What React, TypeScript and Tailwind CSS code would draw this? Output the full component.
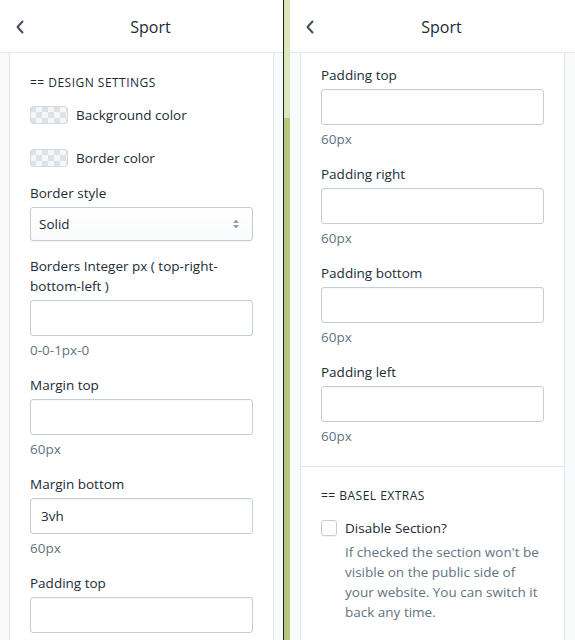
import React from "react";

const ink = "text-[#212b36]";
const muted = "text-[#637381]";

const Header = () => (
  <div className="flex h-[53px] shrink-0 items-center border-b border-[#e6e9ec] bg-white pt-[2px]">
    <button className="flex h-full w-[40px] items-center justify-center text-[#454f5b]">
      <svg width="10" height="14" viewBox="0 0 10 14" fill="none">
        <path d="M7.5 1.5L2.5 7l5 5.5" stroke="currentColor" strokeWidth="2" strokeLinecap="round" strokeLinejoin="round" />
      </svg>
    </button>
    <div className={`flex-1 text-center text-[16px] ${ink}`}>Sport</div>
    <div className="w-[22px]" />
  </div>
);

const Swatch = () => (
  <svg width="38" height="18" viewBox="0 0 38 18" className="shrink-0 rounded-[3px]">
    <defs>
      <pattern id="chk" width="12" height="12" patternUnits="userSpaceOnUse">
        <rect width="12" height="12" fill="#f4f6f8" />
        <rect width="6" height="6" fill="#dde2e7" />
        <rect x="6" y="6" width="6" height="6" fill="#dde2e7" />
      </pattern>
    </defs>
    <rect x="0.5" y="0.5" width="37" height="17" rx="2.5" fill="url(#chk)" stroke="#d3d9df" />
  </svg>
);

const SectionTitle = ({ children }: { children: React.ReactNode }) => (
  <div className={`pt-px text-[12px] font-medium uppercase leading-5 tracking-[0.04em] ${ink}`}>
    == {children}
  </div>
);

const TextField = ({ label, value, help }: { label: string; value?: string; help?: string }) => (
  <div className="flex flex-col">
    <div className={`leading-5 ${ink}`}>{label}</div>
    <div
      className={`mt-1 flex h-[36px] items-center rounded-[3px] border border-[#c4cdd5] bg-white px-[10px] shadow-[inset_0_1px_0_0_rgba(99,115,129,0.05)] ${ink}`}
    >
      {value}
    </div>
    {help && <div className={`mt-1 leading-5 ${muted}`}>{help}</div>}
  </div>
);

const Panel = ({ width, gutter, children }: { width: string; gutter: string; children: React.ReactNode }) => (
  <div className={`flex h-full shrink-0 flex-col ${width}`}>
    <Header />
    <div className={`flex-1 overflow-hidden bg-[#f9fafb] ${gutter}`}>
      <div className="h-full border-x border-[#e3e6e9] bg-white">{children}</div>
    </div>
  </div>
);

export default function App() {
  return (
    <div
      className="flex h-[640px] w-[575px] overflow-hidden bg-white text-[13.5px]"
      style={{ fontFamily: '"Open Sans", "Noto Sans", sans-serif' }}
    >
      <Panel width="w-[283px]" gutter="px-[9px]">
        <div className="flex flex-col px-5 pt-[19px]">
          <SectionTitle>Design settings</SectionTitle>
          <div className="mt-[12px] flex h-5 items-center gap-2">
            <Swatch />
            <span className={ink}>Background color</span>
          </div>
          <div className="mt-[23px] flex h-5 items-center gap-2">
            <Swatch />
            <span className={ink}>Border color</span>
          </div>
          <div className="mt-[15px] flex flex-col">
            <div className={`leading-5 ${ink}`}>Border style</div>
            <div className="mt-1 flex h-[34px] items-center justify-between rounded-[3px] border border-[#c4cdd5] bg-gradient-to-b from-white to-[#f9fafb] pl-2 pr-3 shadow-[0_1px_0_0_rgba(22,29,37,0.05)]">
              <span className={ink}>Solid</span>
              <svg width="8" height="12" viewBox="0 0 8 12" className="text-[#919eab]">
                <path d="M4 1.5L7 5H1z M4 10.5L1 7h6z" fill="currentColor" />
              </svg>
            </div>
          </div>
          <div className="mt-[15px]">
            <TextField label="Borders Integer px ( top-right-bottom-left )" help="0-0-1px-0" />
          </div>
          <div className="mt-[15px]">
            <TextField label="Margin top" help="60px" />
          </div>
          <div className="mt-[15px]">
            <TextField label="Margin bottom" value="3vh" help="60px" />
          </div>
          <div className="mt-[15px]">
            <TextField label="Padding top" />
          </div>
        </div>
      </Panel>

      <div className="w-px shrink-0 bg-[#1e1e1e]" />
      <div className="flex w-[6px] shrink-0 flex-col">
        <div className="h-[118px] bg-[#dde5bd]" />
        <div className="flex-1 bg-[#b7c57e]" />
      </div>

      <Panel width="w-[285px]" gutter="px-[10px]">
        <div className="flex flex-col gap-[15px] px-5 pb-5 pt-3">
          <TextField label="Padding top" help="60px" />
          <TextField label="Padding right" help="60px" />
          <TextField label="Padding bottom" help="60px" />
          <TextField label="Padding left" help="60px" />
        </div>
        <div className="border-t border-[#e3e6e9] px-5 pt-[18px]">
          <SectionTitle>Basel extras</SectionTitle>
          <div className="mt-[12px] flex gap-2">
            <div className="mt-[2px] h-4 w-4 shrink-0 rounded-[3px] border border-[#c4cdd5] bg-white shadow-[0_1px_0_0_rgba(22,29,37,0.05)]" />
            <div className="flex flex-col">
              <span className={`leading-5 ${ink}`}>Disable Section?</span>
              <p className={`mt-1 leading-5 ${muted}`}>
                If checked the section won't be visible on the public side of your website. You can switch it
                back any time.
              </p>
            </div>
          </div>
        </div>
      </Panel>
    </div>
  );
}
